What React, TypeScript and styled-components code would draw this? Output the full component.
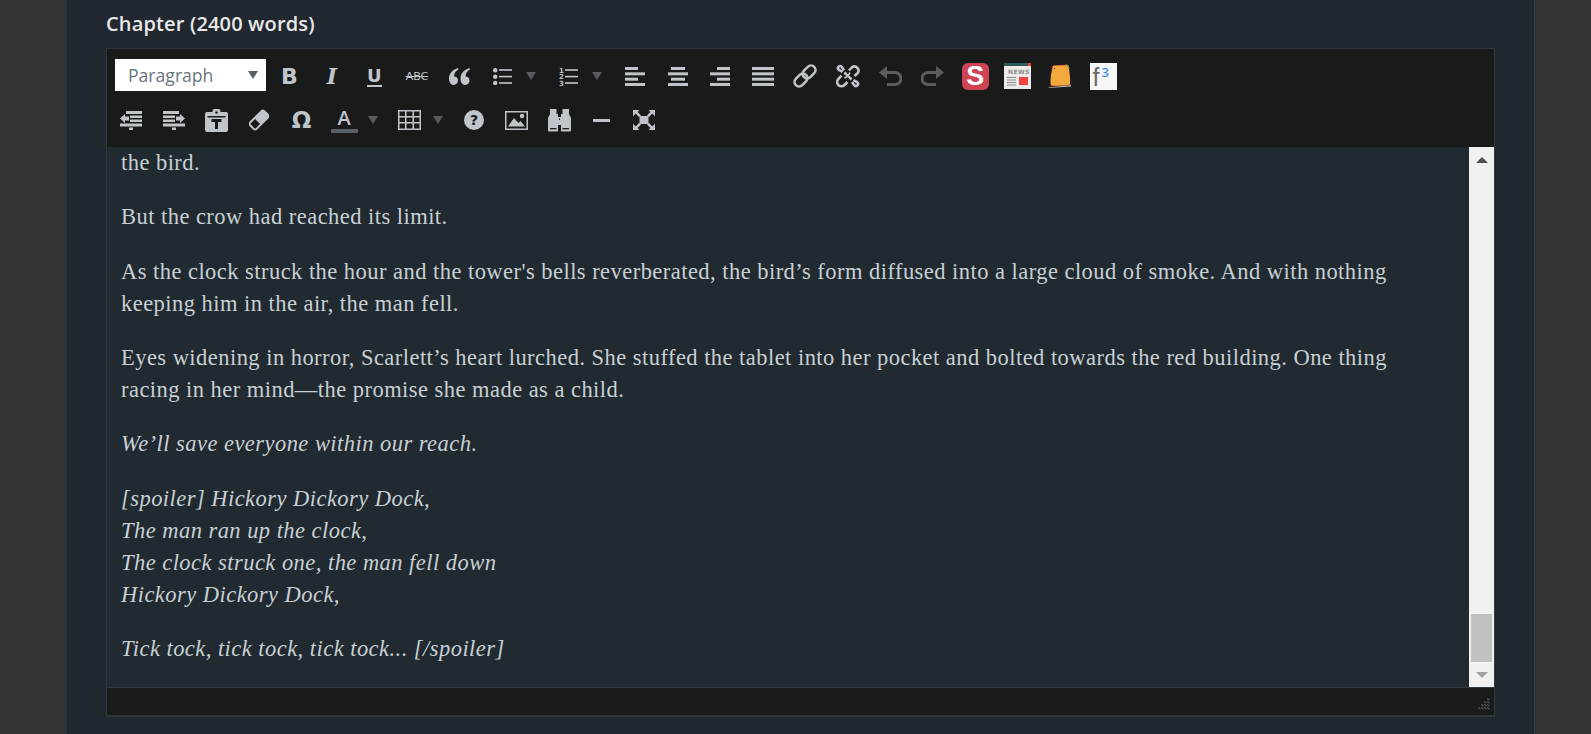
import React from 'react'
import styled, { createGlobalStyle } from 'styled-components'

const GlobalStyle = createGlobalStyle`
    html, body {
        margin: 0;
        padding: 0;
        height: 734px;
        overflow: hidden;
        background: #2f3335;
    }
`

const Svg: React.FC<{ w: number; h: number; children: React.ReactNode }> = ({ w, h, children }) => (
    <svg width={w} height={h} viewBox={`0 0 ${w} ${h}`} fill="currentColor">
        {children}
    </svg>
)

const Bars: React.FC<{ rows: [number, number][] }> = ({ rows }) => (
    <Svg w={22} h={19}>
        {rows.map(([x, w], i) => (
            <rect key={i} x={x} y={i * 5.33} width={w} height={3} />
        ))}
    </Svg>
)

const QuoteIcon = () => (
    <Svg w={21} h={17}>
        <path d="M9 0C4 1.5 0 5 0 10.5 0 14.5 2 17 4.7 17 7.3 17 9 15 9 12.6 9 10.2 7.3 8.6 5.2 8.6 5 5.5 6.5 3 9.6 1.5Z" />
        <path d="M20.5 0C15.5 1.5 11.5 5 11.5 10.5 11.5 14.5 13.5 17 16.2 17 18.8 17 20.5 15 20.5 12.6 20.5 10.2 18.8 8.6 16.7 8.6 16.5 5.5 18 3 21 1.5Z" />
    </Svg>
)

const ListIcon = () => (
    <Svg w={19} h={17}>
        <circle cx={2.2} cy={2.2} r={2.2} />
        <circle cx={2.2} cy={8.7} r={2.2} />
        <circle cx={2.2} cy={15} r={2.2} />
        <rect x={6} y={1.2} width={13} height={1.6} />
        <rect x={6} y={7.8} width={13} height={1.6} />
        <rect x={6} y={14.2} width={13} height={1.6} />
    </Svg>
)

const NumListIcon = () => (
    <Svg w={19} h={23}>
        <text x={0} y={8} fontSize={7} fontWeight={700} fontFamily="'DejaVu Sans', sans-serif">1</text>
        <text x={0} y={14} fontSize={7} fontWeight={700} fontFamily="'DejaVu Sans', sans-serif">2</text>
        <text x={0} y={20.5} fontSize={7} fontWeight={700} fontFamily="'DejaVu Sans', sans-serif">3</text>
        <rect x={6} y={4.2} width={13} height={1.6} />
        <rect x={6} y={10.8} width={13} height={1.6} />
        <rect x={6} y={17.2} width={13} height={1.6} />
    </Svg>
)

const LinkIcon = () => (
    <Svg w={26} h={26}>
        <g fill="none" stroke="currentColor" strokeWidth={2.6} transform="rotate(-45 13 13)">
            <rect x={0} y={8.5} width={14.5} height={9} rx={4.5} />
            <rect x={11.5} y={8.5} width={14.5} height={9} rx={4.5} />
        </g>
    </Svg>
)

const UnlinkIcon = () => (
    <Svg w={24} h={24}>
        <g fill="none" stroke="currentColor" strokeWidth={2.6}>
            <path d="M13 6.5 16 3.2a4.2 4.2 0 0 1 5.8 5.8L18.5 12" />
            <path d="M5.5 11.5 2.4 15a4.2 4.2 0 0 0 6 6L11.5 18" />
            <path d="M6.5 8 2.6 5.6A2 2 0 0 1 5.6 2.6L8 6.5" />
            <path d="M16 18 18.4 21.4A2 2 0 0 0 21.4 18.4L17.5 16" />
        </g>
        <path stroke="currentColor" strokeWidth={1.6} d="M12 12 8 9M12 12 9 8M12 12 16 15M12 12 15 16M12 12 14 8.5M12 12 8.5 14" />
    </Svg>
)

const UndoIcon = () => (
    <Svg w={23} h={20}>
        <path d="M0 6.5 8 0V13Z" />
        <path d="M6 6.5H16a6 6 0 0 1 0 12H8" fill="none" stroke="currentColor" strokeWidth={3} />
    </Svg>
)

const RedoIcon = () => (
    <Svg w={23} h={20}>
        <path d="M23 6.5 15 0V13Z" />
        <path d="M17 6.5H7a6 6 0 0 0 0 12H15" fill="none" stroke="currentColor" strokeWidth={3} />
    </Svg>
)

const NewsIcon = () => (
    <Svg w={27} h={26}>
        <rect width={27} height={26} fill="#ecebe9" />
        <rect width={27} height={3} fill="#2c5a57" />
        <rect x={24} width={3} height={3} fill="#e8413a" />
        <text x={4} y={11} fontSize={6} fontWeight={700} letterSpacing={0.4} fill="#8a8a8a" fontFamily="'DejaVu Sans', sans-serif">NEWS</text>
        <rect x={3} y={14} width={9} height={1} fill="#8a8a8a" />
        <rect x={3} y={16.5} width={9} height={1} fill="#8a8a8a" />
        <rect x={3} y={19} width={9} height={1} fill="#8a8a8a" />
        <rect x={3} y={21.5} width={9} height={1} fill="#8a8a8a" />
        <rect x={15} y={14} width={9} height={8} fill="#f2433c" />
    </Svg>
)

const StickyIcon = () => (
    <Svg w={24} h={24}>
        <path d="M0 23.5 23 21 23 22.5 1 24Z" fill="#b7b9ad" />
        <path d="M4 2 19 0.5 22.5 21 2.5 22.5Z" fill="#c83b2b" />
        <path d="M17 0.5 20.5 1 22 6 20 3Z" fill="#6fa83c" />
        <path d="M5.5 1.5Q13 1.5 19 1.5 21.5 4 21.5 8 22.5 15 22 20 20 21.5 12 21.5 5 22 3 21 2 18 3 11 4 6 5.5 1.5Z" fill="#f3a93f" />
        <rect x={6} y={4} width={1} height={1} fill="#4a2a80" />
    </Svg>
)

const OutdentIcon = () => (
    <Svg w={22} h={19}>
        <rect x={6} width={16} height={3} />
        <rect x={10} y={4.5} width={12} height={2.5} />
        <rect x={10} y={8.5} width={12} height={2.5} />
        <rect x={0} y={12.5} width={22} height={3} />
        <rect x={9} y={16.5} width={4} height={2.5} />
        <path d="M0 7.5 5 3V5.5H9V9.5H5V12Z" />
    </Svg>
)

const IndentIcon = () => (
    <Svg w={22} h={19}>
        <rect x={0} width={16} height={3} />
        <rect x={0} y={4.5} width={12} height={2.5} />
        <rect x={0} y={8.5} width={12} height={2.5} />
        <rect x={0} y={12.5} width={22} height={3} />
        <rect x={9} y={16.5} width={4} height={2.5} />
        <path d="M22 7.5 17 3V5.5H13V9.5H17V12Z" />
    </Svg>
)

const PasteIcon = () => (
    <Svg w={23} h={23}>
        <path d="M7.5 3V2a2 2 0 0 1 2-2h4a2 2 0 0 1 2 2v1h5.5a2 2 0 0 1 2 2v16a2 2 0 0 1-2 2H2a2 2 0 0 1-2-2V5a2 2 0 0 1 2-2Z" />
        <rect x={2.5} y={7} width={18} height={1.5} fill="#191b1b" />
        <circle cx={11.5} cy={3.5} r={1.2} fill="#191b1b" />
        <path d="M6.5 10H16.5V13H13V20H10V13H6.5Z" fill="#191b1b" />
    </Svg>
)

const EraserIcon = () => (
    <Svg w={20} h={22}>
        <g transform="rotate(-45 10 11)">
            <rect x={0} y={6.5} width={20} height={9} rx={2} fill="none" stroke="currentColor" strokeWidth={2} />
            <rect x={8} y={6.5} width={12} height={9} rx={2} />
        </g>
    </Svg>
)

const TableIcon = () => (
    <Svg w={23} h={20}>
        <path fillRule="evenodd" d="M0 0H23V20H0ZM1.5 1.5V6H7V1.5ZM8.5 1.5V6H14.5V1.5ZM16 1.5V6H21.5V1.5ZM1.5 7.5V12H7V7.5ZM8.5 7.5V12H14.5V7.5ZM16 7.5V12H21.5V7.5ZM1.5 13.5V18.5H7V13.5ZM8.5 13.5V18.5H14.5V13.5ZM16 13.5V18.5H21.5V13.5Z" />
    </Svg>
)

const HelpIcon = () => (
    <Svg w={20} h={20}>
        <circle cx={10} cy={10} r={10} />
        <text x={10} y={15} textAnchor="middle" fontSize={14} fontWeight={700} fill="#191b1b" fontFamily="'DejaVu Sans', sans-serif">?</text>
    </Svg>
)

const ImageIcon = () => (
    <Svg w={23} h={19}>
        <path fillRule="evenodd" d="M0 0H23V19H0ZM1.5 1.5V17.5H21.5V1.5Z" />
        <path d="M3 15.5 9 7 13.5 12 15.5 10 20 15.5Z" />
        <circle cx={17} cy={5} r={2.2} />
    </Svg>
)

const BinocularsIcon = () => (
    <Svg w={23} h={23}>
        <path d="M2 0H8.5V5H10V22.5H1A1 1 0 0 1 0 21.5V9L2 5Z" />
        <path d="M14.5 0H21V5L23 9V21.5A1 1 0 0 1 22 22.5H13V5H14.5Z" />
        <rect x={10} y={8} width={3} height={8} />
        <rect x={2} y={19} width={6.5} height={1.3} fill="#191b1b" />
        <rect x={14.5} y={19} width={6.5} height={1.3} fill="#191b1b" />
        <rect x={11} y={9.5} width={1} height={1.5} fill="#191b1b" />
    </Svg>
)

const FullscreenIcon = () => (
    <Svg w={22} h={20}>
        <rect x={6.5} y={6} width={9} height={8} />
        <path d="M0 0H6.5L4.6 1.9 8 5.2 6 7 2.6 3.6 0 6.5Z" />
        <path d="M22 0H15.5L17.4 1.9 14 5.2 16 7 19.4 3.6 22 6.5Z" />
        <path d="M0 20H6.5L4.6 18.1 8 14.8 6 13 2.6 16.4 0 13.5Z" />
        <path d="M22 20H15.5L17.4 18.1 14 14.8 16 13 19.4 16.4 22 13.5Z" />
    </Svg>
)

const Grip = () => {
    const dots: [number, number][] = []
    for (let row = 0; row < 4; row++) {
        for (let col = 3 - row; col < 4; col++) {
            dots.push([col * 3, row * 3])
            dots.push([col * 3 + 1, row * 3 + 1])
        }
    }
    return (
        <Svg w={13} h={13}>
            {dots.map(([x, y], i) => (
                <rect key={i} x={x} y={y} width={1.4} height={1.4} fill="#4b4f50" />
            ))}
        </Svg>
    )
}

const App: React.FC = () => {
    return (
        <Page>
            <GlobalStyle />
            <Panel>
                <Label>Chapter (2400 words)</Label>
                <Editor>
                    <Toolbar>
                        <Row $pl={8}>
                            <FormatSelect>
                                Paragraph
                                <SelectCaret />
                            </FormatSelect>
                            <Tool><BoldGlyph>B</BoldGlyph></Tool>
                            <Tool><ItalicGlyph>I</ItalicGlyph></Tool>
                            <Tool><UnderGlyph>U</UnderGlyph></Tool>
                            <Tool><StrikeGlyph>ABC</StrikeGlyph></Tool>
                            <Tool><QuoteIcon /></Tool>
                            <Split><Tool><ListIcon /></Tool><Caret /></Split>
                            <Split $w={67}><Tool><NumListIcon /></Tool><Caret /></Split>
                            <Tool><Bars rows={[[1, 13], [1, 20], [1, 13], [1, 20]]} /></Tool>
                            <Tool><Bars rows={[[4, 14], [1, 20], [4, 14], [1, 20]]} /></Tool>
                            <Tool><Bars rows={[[8, 13], [1, 20], [8, 13], [1, 20]]} /></Tool>
                            <Tool><Bars rows={[[0, 22], [0, 22], [0, 22], [0, 22]]} /></Tool>
                            <Tool><LinkIcon /></Tool>
                            <Tool><UnlinkIcon /></Tool>
                            <Tool $muted><UndoIcon /></Tool>
                            <Tool $muted><RedoIcon /></Tool>
                            <Tool><SnipLogo>S</SnipLogo></Tool>
                            <Tool><NewsIcon /></Tool>
                            <Tool><StickyIcon /></Tool>
                            <Tool><FormulaLogo>f<sup>3</sup></FormulaLogo></Tool>
                        </Row>
                        <Row $pl={3}>
                            <Tool><OutdentIcon /></Tool>
                            <Tool><IndentIcon /></Tool>
                            <Tool><PasteIcon /></Tool>
                            <Tool><EraserIcon /></Tool>
                            <Tool><OmegaGlyph>Ω</OmegaGlyph></Tool>
                            <Split $w={65}><Tool><ColorGlyph>A</ColorGlyph></Tool><Caret /></Split>
                            <Split $w={65}><Tool><TableIcon /></Tool><Caret /></Split>
                            <Tool><HelpIcon /></Tool>
                            <Tool><ImageIcon /></Tool>
                            <Tool><BinocularsIcon /></Tool>
                            <Tool><HrBar /></Tool>
                            <Tool><FullscreenIcon /></Tool>
                        </Row>
                    </Toolbar>
                    <Body>
                        <Content>
                            <Para>the bird.</Para>
                            <Para>But the crow had reached its limit.</Para>
                            <Para>
                                As the clock struck the hour and the tower's bells reverberated, the bird’s form diffused into a large cloud of smoke. And with nothing
                                <br />
                                keeping him in the air, the man fell.
                            </Para>
                            <Para>
                                Eyes widening in horror, Scarlett’s heart lurched. She stuffed the tablet into her pocket and bolted towards the red building. One thing
                                <br />
                                racing in her mind—the promise she made as a child.
                            </Para>
                            <Para><em>We’ll save everyone within our reach.</em></Para>
                            <Para>
                                <em>
                                    [spoiler] Hickory Dickory Dock,
                                    <br />
                                    The man ran up the clock,
                                    <br />
                                    The clock struck one, the man fell down
                                    <br />
                                    Hickory Dickory Dock,
                                </em>
                            </Para>
                            <Para><em>Tick tock, tick tock, tick tock... [/spoiler]</em></Para>
                        </Content>
                        <Scrollbar>
                            <ScrollButton><ArrowUp /></ScrollButton>
                            <Track><Thumb /></Track>
                            <ScrollButton><ArrowDown /></ScrollButton>
                        </Scrollbar>
                    </Body>
                    <StatusBar><Grip /></StatusBar>
                </Editor>
            </Panel>
        </Page>
    )
}

const Page = styled.div`
    width: 1591px;
    height: 734px;
    overflow: hidden;
    background: #2f3335;
`
const Panel = styled.div`
    width: 1469px;
    height: 734px;
    margin-left: 66px;
    box-sizing: border-box;
    padding: 0 39px;
    background: #212830;
    border-left: 1px solid #2c323a;
    border-right: 1px solid #3a3f42;
`
const Label = styled.div`
    height: 48px;
    line-height: 48px;
    font-family: "Open Sans", sans-serif;
    font-size: 20px;
    font-weight: 600;
    letter-spacing: 0.15px;
    color: #e9e9e9;
`
const Editor = styled.div`
    display: flex;
    flex-direction: column;
    height: 669px;
    box-sizing: border-box;
    border: 1px solid #2f363c;
    border-bottom-width: 2px;
`
const Toolbar = styled.div`
    display: flex;
    flex-direction: column;
    flex: none;
    height: 98px;
    box-sizing: border-box;
    padding-top: 5px;
    background: #191b1b;
`
const Row = styled.div<{ $pl: number }>`
    display: flex;
    align-items: center;
    height: 44px;
    padding-left: ${p => p.$pl}px;
    color: #bfc5c9;
`
const FormatSelect = styled.div`
    display: flex;
    align-items: center;
    justify-content: space-between;
    width: 151px;
    height: 32px;
    margin: 0 2px 2px 0;
    box-sizing: border-box;
    padding: 0 8px 0 13px;
    background: #fff;
    font-family: "Open Sans", sans-serif;
    font-size: 17.6px;
    color: #6b7580;
`
const SelectCaret = styled.span`
    border-left: 5px solid transparent;
    border-right: 5px solid transparent;
    border-top: 8px solid #5a6066;
`
const Tool = styled.div<{ $muted?: boolean }>`
    display: flex;
    align-items: center;
    justify-content: center;
    flex: none;
    width: 42.55px;
    height: 44px;
    color: ${p => (p.$muted ? '#5b5e60' : 'inherit')};
`
const Split = styled.div<{ $w?: number }>`
    display: flex;
    align-items: center;
    flex: none;
    width: ${p => p.$w ?? 66}px;
`
const Caret = styled.span`
    margin-left: 3px;
    border-left: 5px solid transparent;
    border-right: 5px solid transparent;
    border-top: 8px solid #565b60;
`
const BoldGlyph = styled.span`
    font-family: "DejaVu Sans", sans-serif;
    font-size: 22px;
    font-weight: 700;
`
const ItalicGlyph = styled(BoldGlyph)`
    font-style: italic;
    font-family: "DejaVu Serif", serif;
`
const UnderGlyph = styled.span`
    font-family: "DejaVu Sans", sans-serif;
    font-size: 18px;
    font-weight: 700;
    line-height: 19px;
    border-bottom: 2px solid currentColor;
`
const StrikeGlyph = styled.span`
    font-family: "DejaVu Sans", sans-serif;
    font-size: 11px;
    font-weight: 400;
    text-decoration: line-through;
`
const OmegaGlyph = styled.span`
    font-family: "DejaVu Sans", sans-serif;
    font-size: 23px;
    font-weight: 700;
`
const ColorGlyph = styled.span`
    width: 27px;
    font-family: "Open Sans", sans-serif;
    font-size: 20px;
    font-weight: 600;
    line-height: 22px;
    text-align: center;
    border-bottom: 4px solid #5a6068;
`
const SnipLogo = styled.div`
    width: 27px;
    height: 27px;
    border-radius: 6px;
    background: #cf4453;
    color: #fff;
    font-family: "Liberation Sans", sans-serif;
    font-size: 27px;
    font-weight: 700;
    line-height: 27px;
    text-align: center;
`
const FormulaLogo = styled.div`
    width: 27px;
    height: 27px;
    box-sizing: border-box;
    padding-left: 3px;
    background: #f7f7f7;
    color: #6a6a6a;
    font-family: "Liberation Sans", sans-serif;
    font-size: 25px;
    line-height: 28px;
    sup {
        margin-left: 2px;
        color: #3f8ef5;
        font-family: "Open Sans", sans-serif;
        font-size: 13px;
        font-weight: 600;
        line-height: 0;
        vertical-align: 9px;
    }
`
const HrBar = styled.span`
    width: 17px;
    height: 3px;
    background: currentColor;
`
const Body = styled.div`
    display: flex;
    flex: 1;
    min-height: 0;
    background: #212a31;
`
const Content = styled.div`
    flex: 1;
    min-width: 0;
    overflow: hidden;
    padding-left: 14px;
    font-family: "Liberation Serif", serif;
    font-size: 22.5px;
    letter-spacing: 0.46px;
    line-height: 32.1px;
    color: #c8d0d4;
    white-space: nowrap;
`
const Para = styled.p`
    margin: 0 0 22.2px;
`
const Scrollbar = styled.div`
    display: flex;
    flex-direction: column;
    flex: none;
    width: 25px;
    background: #f1f1f1;
`
const ScrollButton = styled.div`
    display: flex;
    align-items: center;
    justify-content: center;
    flex: none;
    height: 25px;
`
const ArrowUp = styled.span`
    border-left: 6px solid transparent;
    border-right: 6px solid transparent;
    border-bottom: 6px solid #505050;
`
const ArrowDown = styled.span`
    border-left: 6px solid transparent;
    border-right: 6px solid transparent;
    border-top: 6px solid #a3a3a3;
`
const Track = styled.div`
    display: flex;
    flex: 1;
    align-items: flex-end;
    justify-content: center;
`
const Thumb = styled.div`
    width: 21px;
    height: 48px;
    background: #c1c1c1;
`
const StatusBar = styled.div`
    display: flex;
    flex: none;
    align-items: flex-end;
    justify-content: flex-end;
    height: 28px;
    box-sizing: border-box;
    padding: 0 3px 4px 0;
    background: #1a1c1c;
    border-top: 1px solid #2f363c;
`

export default App
